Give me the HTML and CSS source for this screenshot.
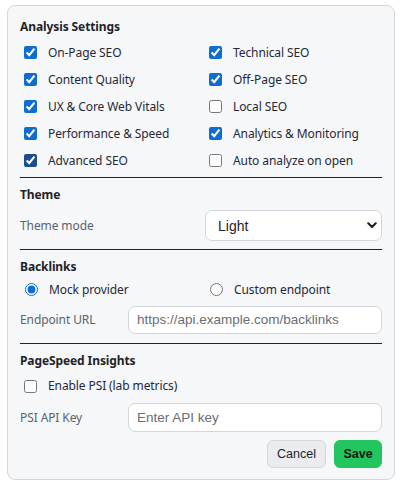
FILE: index.html
```html
<!DOCTYPE html>
<html lang="en">
<head>
<meta charset="utf-8">
<title>Settings</title>
<link rel="stylesheet" href="styles.css">
</head>
<body>
<div class="card">
  <h2 class="heading first">Analysis Settings</h2>
  <div class="check-grid">
    <label class="opt"><input type="checkbox" checked>On-Page SEO</label>
    <label class="opt"><input type="checkbox" checked>Technical SEO</label>
    <label class="opt"><input type="checkbox" checked>Content Quality</label>
    <label class="opt"><input type="checkbox" checked>Off-Page SEO</label>
    <label class="opt"><input type="checkbox" checked>UX &amp; Core Web Vitals</label>
    <label class="opt"><input type="checkbox">Local SEO</label>
    <label class="opt"><input type="checkbox" checked>Performance &amp; Speed</label>
    <label class="opt"><input type="checkbox" checked>Analytics &amp; Monitoring</label>
    <label class="opt"><input type="checkbox" class="hover" checked>Advanced SEO</label>
    <label class="opt"><input type="checkbox">Auto analyze on open</label>
  </div>
  <hr class="divider d1">

  <h2 class="heading">Theme</h2>
  <div class="half-row theme-row">
    <span class="field-label">Theme mode</span>
    <div class="select-wrap">
      <select class="select"><option>Light</option><option>Dark</option></select>
      <svg class="chev" width="10" height="7" viewBox="0 0 10 7"><path d="M1.3 1.3 L5 5 L8.7 1.3" fill="none" stroke="#1f2328" stroke-width="2.2" stroke-linecap="round" stroke-linejoin="round"/></svg>
    </div>
  </div>
  <hr class="divider d2">

  <h2 class="heading">Backlinks</h2>
  <div class="half-row radio-row">
    <label class="opt radio"><input type="radio" name="bl" checked>Mock provider</label>
    <label class="opt radio"><input type="radio" name="bl">Custom endpoint</label>
  </div>
  <div class="field-row endpoint-row">
    <span class="field-label">Endpoint URL</span>
    <input class="text-input" type="text" placeholder="https://api.example.com/backlinks">
  </div>
  <hr class="divider d3">

  <h2 class="heading">PageSpeed Insights</h2>
  <label class="opt psi-row"><input type="checkbox">Enable PSI (lab metrics)</label>
  <div class="field-row key-row">
    <span class="field-label">PSI API Key</span>
    <input class="text-input tall" type="text" placeholder="Enter API key">
  </div>
  <div class="actions">
    <button class="btn cancel">Cancel</button>
    <button class="btn save">Save</button>
  </div>
</div>
</body>
</html>
```

FILE: styles.css
```css
* { box-sizing: border-box; }

html, body { margin: 0; background: #ffffff; }

body {
  padding: 5px 8px 0 7px;
  font-family: "Noto Sans", "Open Sans", sans-serif;
  font-size: 12px;
  letter-spacing: -0.1px;
  color: #1f2937;
}

.card {
  width: 388px;
  height: 475px;
  background: #f6f7f9;
  border: 1px solid #d3d7dd;
  border-radius: 8px;
  padding: 12px 12px 11px;
  display: flex;
  flex-direction: column;
}

.heading {
  margin: 8px 0 0;
  font-size: 12px;
  line-height: 18px;
  font-weight: 700;
  color: #1f2328;
}

.heading.first { margin: 0 0 3px; }

.check-grid {
  display: grid;
  grid-template-columns: 1fr 1fr;
  column-gap: 8px;
  grid-auto-rows: 27px;
}

.opt {
  display: flex;
  align-items: center;
  line-height: 18px;
  color: #1f2937;
  white-space: nowrap;
}

.opt input[type="checkbox"] {
  width: 13px;
  height: 13px;
  margin: 0 11px 0 4px;
  accent-color: #0f6cd0;
}

.opt input.hover { accent-color: #1b4c8c; }

.opt input[type="radio"] {
  width: 13px;
  height: 13px;
  margin: 0 11px 0 5px;
  accent-color: #0f6cd0;
}

.divider {
  margin: 3px 0 0;
  border: 0;
  border-top: 1px solid #1f2530;
  height: 0;
}

.d2 { margin-top: 8px; }
.d3 { margin-top: 9px; }

.half-row {
  display: grid;
  grid-template-columns: 1fr 1fr;
  column-gap: 8px;
  align-items: center;
}

.theme-row { margin-top: 6px; height: 31px; }

.field-label { color: #5b6270; }

.select-wrap { position: relative; height: 31px; }

.select {
  appearance: none;
  -webkit-appearance: none;
  width: 100%;
  height: 31px;
  border: 1px solid #d3d7dd;
  border-radius: 7px;
  background: #ffffff;
  padding: 0 12px;
  font-family: "Liberation Sans", Arial, sans-serif;
  font-size: 14px;
  letter-spacing: 0;
  color: #1f2328;
  outline: none;
}

.chev {
  position: absolute;
  right: 5px;
  top: 12px;
  pointer-events: none;
}

.radio-row { margin-top: 4px; height: 20px; }

.field-row {
  display: grid;
  grid-template-columns: 100px 1fr;
  column-gap: 8px;
  align-items: center;
}

.endpoint-row { margin-top: 6px; height: 28px; }

.text-input {
  width: 100%;
  height: 28px;
  border: 1px solid #d3d7dd;
  border-radius: 7px;
  background: #ffffff;
  padding: 0 8px;
  font-family: "Liberation Sans", Arial, sans-serif;
  font-size: 13.5px;
  letter-spacing: 0;
  color: #1f2328;
  outline: none;
}

.text-input::placeholder { color: #6a6e75; }

.text-input.tall { height: 29px; }

.psi-row { margin-top: 7px; height: 20px; }

.key-row { margin-top: 7px; height: 29px; }

.actions {
  margin-top: 8px;
  display: flex;
  justify-content: flex-end;
  gap: 8px;
}

.btn {
  height: 28px;
  border-radius: 6px;
  font-family: "Liberation Sans", Arial, sans-serif;
  font-size: 12.5px;
  letter-spacing: 0;
  padding: 0;
  cursor: pointer;
}

.cancel {
  width: 59px;
  background: #eaecef;
  border: 1px solid #d3d7dd;
  color: #1f2328;
}

.save {
  width: 48px;
  background: #22c55e;
  border: 1px solid #22c55e;
  color: #0b1a10;
  font-weight: 700;
}
```
